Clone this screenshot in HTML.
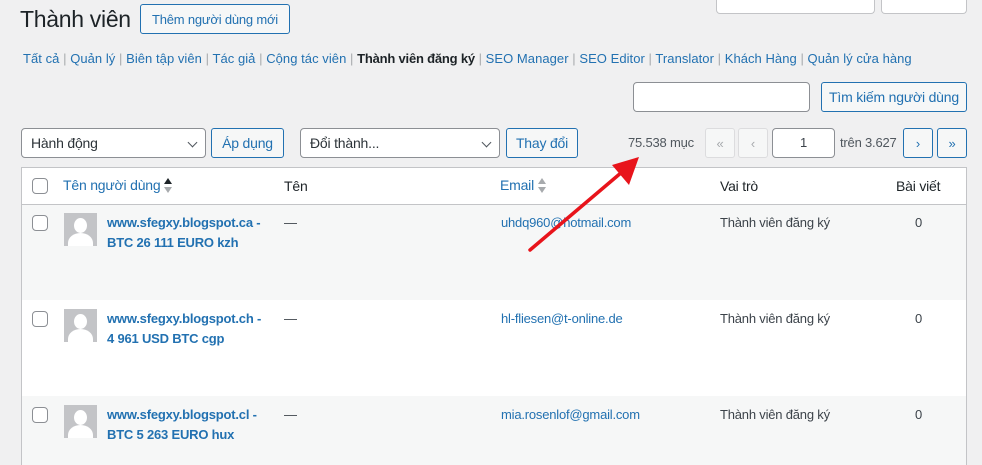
<!DOCTYPE html>
<html style="overflow:hidden;height:465px"><head><meta charset="utf-8"><style>
*{box-sizing:border-box;margin:0;padding:0}
body{width:982px;height:465px;overflow:hidden;background:#f0f0f1;font-family:"Liberation Sans",sans-serif;font-size:13px;color:#3c434a;position:relative;letter-spacing:-0.2px}
.a{position:absolute}
.btn{position:absolute;border:1px solid #2271b1;color:#2271b1;background:#f6f7f7;border-radius:3px;display:flex;align-items:center;justify-content:center;font-size:13px}
.sel{position:absolute;border:1px solid #8c8f94;background:#fff;border-radius:4px;display:flex;align-items:center;padding-left:9px;font-size:14px;color:#2c3338}
.sel:after{content:"";position:absolute;right:9px;top:10px;width:6px;height:6px;border-right:1.5px solid #50575e;border-bottom:1.5px solid #50575e;transform:rotate(45deg)}
.nav{position:absolute;left:23px;top:51px;color:#2271b1;font-size:13px;white-space:nowrap;letter-spacing:0.05px}
.nav span{color:#a7aaad}
.nav b{color:#1d2327;letter-spacing:-0.2px}
.cb{position:absolute;width:16px;height:16px;border:1px solid #8c8f94;border-radius:4px;background:#fff}
.av{position:absolute;width:33px;height:33px;background:#c3c4c7;overflow:hidden}
.av:before{content:"";position:absolute;left:10px;top:5px;width:13px;height:15px;border-radius:50%;background:#fff}
.av:after{content:"";position:absolute;left:4px;top:20px;width:25px;height:20px;border-radius:50% 50% 0 0;background:#fff}
.lnk{color:#2271b1}
.nm{color:#2271b1;font-weight:bold;line-height:20px}
.so{display:inline-block;vertical-align:middle;width:8px;height:16px;position:relative;margin-left:4px}
.so i{position:absolute;left:0;width:0;height:0;border-left:4px solid transparent;border-right:4px solid transparent}
.so .u{top:0;border-bottom:6px solid #a7aaad}
.so .d{top:9px;border-top:6px solid #a7aaad}
</style></head><body>
<div class="a" style="left:716px;top:-12px;width:159px;height:26px;border:1px solid #c3c4c7;border-top:none;background:#fff;border-radius:0 0 4px 4px"></div>
<div class="a" style="left:881px;top:-12px;width:86px;height:26px;border:1px solid #c3c4c7;border-top:none;background:#fff;border-radius:0 0 4px 4px"></div>
<div class="a" style="left:20px;top:6px;font-size:23px;color:#1d2327;letter-spacing:-0.3px">Thành viên</div>
<div class="btn" style="left:140px;top:4px;width:150px;height:30px">Thêm người dùng mới</div>
<div class="nav">Tất cả <span>|</span> Quản lý <span>|</span> Biên tập viên <span>|</span> Tác giả <span>|</span> Cộng tác viên <span>|</span> <b>Thành viên đăng ký</b> <span>|</span> SEO Manager <span>|</span> SEO Editor <span>|</span> Translator <span>|</span> Khách Hàng <span>|</span> Quản lý cửa hàng</div>
<div class="a" style="left:633px;top:82px;width:177px;height:30px;border:1px solid #8c8f94;background:#fff;border-radius:4px"></div>
<div class="btn" style="left:821px;top:82px;width:146px;height:30px;font-size:14px">Tìm kiếm người dùng</div>
<div class="sel" style="left:21px;top:128px;width:185px;height:30px">Hành động</div>
<div class="btn" style="left:211px;top:128px;width:73px;height:30px;font-size:14px">Áp dụng</div>
<div class="sel" style="left:300px;top:128px;width:200px;height:30px">Đổi thành...</div>
<div class="btn" style="left:506px;top:128px;width:72px;height:30px;font-size:14px">Thay đổi</div>
<div class="a" style="left:628px;top:135px;color:#50575e">75.538 mục</div>
<div class="btn" style="left:705px;top:128px;width:30px;height:30px;border-color:#dcdcde;color:#a7aaad">«</div>
<div class="btn" style="left:738px;top:128px;width:30px;height:30px;border-color:#dcdcde;color:#a7aaad">‹</div>
<div class="a" style="left:772px;top:128px;width:63px;height:30px;border:1px solid #8c8f94;background:#fff;border-radius:4px;text-align:center;line-height:28px">1</div>
<div class="a" style="left:840px;top:135px;color:#50575e">trên 3.627</div>
<div class="btn" style="left:903px;top:128px;width:30px;height:30px">›</div>
<div class="btn" style="left:937px;top:128px;width:30px;height:30px">»</div>
<div class="a" style="left:21px;top:167px;width:946px;height:298px;border:1px solid #c3c4c7;border-bottom:none;background:#fff"></div>
<div class="a" style="left:22px;top:204px;width:944px;height:1px;background:#c3c4c7"></div>
<div class="a" style="left:22px;top:205px;width:944px;height:95px;background:#f6f7f7"></div>
<div class="a" style="left:22px;top:396px;width:944px;height:69px;background:#f6f7f7"></div>
<div class="cb" style="left:32px;top:178px"></div>
<div class="a lnk" style="left:63px;top:177px;font-size:14px">Tên người dùng<span class="so"><i class="u" style="border-bottom-color:#1d2327"></i><i class="d"></i></span></div>
<div class="a" style="left:284px;top:178px;font-size:14px;color:#1d2327">Tên</div>
<div class="a lnk" style="left:500px;top:177px;font-size:14px">Email<span class="so"><i class="u"></i><i class="d"></i></span></div>
<div class="a" style="left:720px;top:178px;font-size:14px;color:#1d2327">Vai trò</div>
<div class="a" style="left:896px;top:178px;font-size:14px;color:#1d2327">Bài viết</div>

<div class="cb" style="left:32px;top:215px"></div><div class="av" style="left:64px;top:213px"></div>
<div class="a nm" style="left:107px;top:213px">www.sfegxy.blogspot.ca -<br>BTC 26 111 EURO kzh</div>
<div class="a" style="left:284px;top:215px">—</div><div class="a lnk" style="left:501px;top:215px">uhdq960@hotmail.com</div>
<div class="a" style="left:720px;top:215px">Thành viên đăng ký</div><div class="a" style="left:915px;top:215px">0</div>

<div class="cb" style="left:32px;top:311px"></div><div class="av" style="left:64px;top:309px"></div>
<div class="a nm" style="left:107px;top:309px">www.sfegxy.blogspot.ch -<br>4 961 USD BTC cgp</div>
<div class="a" style="left:284px;top:311px">—</div><div class="a lnk" style="left:501px;top:311px">hl-fliesen@t-online.de</div>
<div class="a" style="left:720px;top:311px">Thành viên đăng ký</div><div class="a" style="left:915px;top:311px">0</div>

<div class="cb" style="left:32px;top:407px"></div><div class="av" style="left:64px;top:405px"></div>
<div class="a nm" style="left:107px;top:405px">www.sfegxy.blogspot.cl -<br>BTC 5 263 EURO hux</div>
<div class="a" style="left:284px;top:407px">—</div><div class="a lnk" style="left:501px;top:407px">mia.rosenlof@gmail.com</div>
<div class="a" style="left:720px;top:407px">Thành viên đăng ký</div><div class="a" style="left:915px;top:407px">0</div>

<svg class="a" style="left:0;top:0" width="982" height="465"><line x1="530" y1="250" x2="622" y2="172" stroke="#e8141b" stroke-width="3.5" stroke-linecap="round"/><polygon points="639,157 612,165 629,185" fill="#e8141b"/></svg>
</body></html>
